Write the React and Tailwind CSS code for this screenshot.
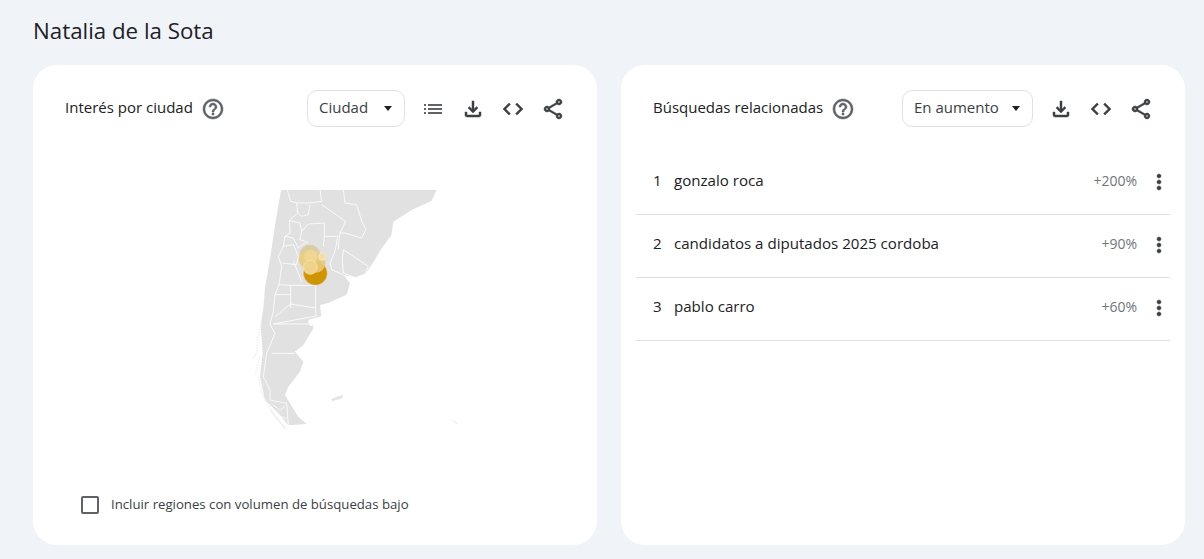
const paths = {
  help: "M11 18h2v-2h-2v2zm1-16C6.48 2 2 6.48 2 12s4.48 10 10 10 10-4.48 10-10S17.52 2 12 2zm0 18c-4.41 0-8-3.59-8-8s3.59-8 8-8 8 3.59 8 8-3.59 8-8 8zm0-14c-2.21 0-4 1.79-4 4h2c0-1.1.9-2 2-2s2 .9 2 2c0 2-3 1.75-3 5h2c0-2.25 3-2.5 3-5 0-2.21-1.79-4-4-4z",
  list: "M3 13h2v-2H3v2zm0 4h2v-2H3v2zm0-8h2V7H3v2zm4 4h14v-2H7v2zm0 4h14v-2H7v2zM7 7v2h14V7H7z",
  download: "M18 15v3H6v-3H4v3c0 1.1.9 2 2 2h12c1.1 0 2-.9 2-2v-3h-2zm-1-4l-1.41-1.41L13 12.17V4h-2v8.17L8.41 9.59 7 11l5 5 5-5z",
  code: "M9.4 16.6L4.8 12l4.6-4.6L8 6l-6 6 6 6 1.4-1.4zm5.2 0l4.6-4.6-4.6-4.6L16 6l6 6-6 6-1.4-1.4z",
  share: "M18 16.08c-.76 0-1.44.3-1.96.77L8.91 12.7c.05-.23.09-.46.09-.7s-.04-.47-.09-.7l7.05-4.11c.54.5 1.25.81 2.04.81 1.66 0 3-1.34 3-3s-1.34-3-3-3-3 1.34-3 3c0 .24.04.47.09.7L8.04 9.81C7.5 9.31 6.79 9 6 9c-1.66 0-3 1.34-3 3s1.34 3 3 3c.79 0 1.5-.31 2.04-.81l7.12 4.16c-.05.21-.08.43-.08.65 0 1.61 1.31 2.92 2.92 2.92 1.61 0 2.92-1.31 2.92-2.92s-1.31-2.92-2.92-2.92zM18 4c.55 0 1 .45 1 1s-.45 1-1 1-1-.45-1-1 .45-1 1-1zM6 13c-.55 0-1-.45-1-1s.45-1 1-1 1 .45 1 1-.45 1-1 1zm12 7.02c-.55 0-1-.45-1-1s.45-1 1-1 1 .45 1 1-.45 1-1 1z",
  more: "M12 8c1.1 0 2-.9 2-2s-.9-2-2-2-2 .9-2 2 .9 2 2 2zm0 2c-1.1 0-2 .9-2 2s.9 2 2 2 2-.9 2-2-.9-2-2-2zm0 6c-1.1 0-2 .9-2 2s.9 2 2 2 2-.9 2-2-.9-2-2-2z",
};

// a thin stroke on top of the fill, the reference icons sit a bit heavier
const Icon = ({ name, className, heavy }) => (
  <svg viewBox="0 0 24 24" className={className} fill="currentColor" stroke={heavy ? "currentColor" : "none"} strokeWidth={heavy ? 0.5 : 0}>
    <path d={paths[name]} />
  </svg>
);

const Dropdown = ({ label, className }) => (
  <div className={`flex h-[37px] items-center justify-between rounded-[10px] border border-[#dfe1e5] pl-[11px] pr-[12px] text-[15px] text-[#3c4043] ${className}`}>
    <span className="-mt-[2px]">{label}</span>
    <span className="h-0 w-0 border-x-[4.5px] border-t-[5px] border-x-transparent border-t-[#202124]" />
  </div>
);

const ToolIcon = ({ name, className = "text-[#3c4043]", heavy = true }) => (
  <Icon name={name} heavy={heavy} className={`h-[24px] w-[24px] shrink-0 ${className}`} />
);

const CardHeader = ({ title, dropdown, dropdownClass, tools }) => (
  <div className="flex h-[37px] items-center">
    <span className="-mt-[2px] text-[15px] text-[#202124]">{title}</span>
    <Icon name="help" heavy className="ml-[8px] h-[24px] w-[24px] text-[#5f6368]" />
    <div className="ml-auto flex items-center">
      <Dropdown label={dropdown} className={dropdownClass} />
      {tools}
    </div>
  </div>
);

const ArgentinaMap = () => (
  <svg viewBox="0 0 720 780" className="h-[260px] w-[240px]">
    <path
      fill="#e1e1e1"
      d="M153 30 L620 30 L605 62 L545 90 L490 125 L484 165 L455 205 L428 250 L408 280 L378 293 L340 284 L360 309 L350 344 L295 369 L270 375 L274 408 L235 420 L235 432 L250 445 L235 470 L220 495 L195 515 L220 545 L210 575 L175 620 L165 645 L180 670 L205 710 L230 732 L175 736 L145 700 L105 660 L90 590 L98 520 L92 435 L100 384 L105 324 L122 224 L137 124 Z"
    />
    <g fill="none" stroke="#ffffff" strokeWidth="2.4" strokeLinejoin="round">
      <path d="M172 30 L182 64 L200 69 L203 99 L178 122 L180 159 L165 169 L160 199 L145 229 L155 259 L147 314 L135 344 L130 394 L120 432 L135 460 L110 520 L100 590 L120 630 L120 660 L170 670 L175 736" />
      <path d="M270 30 L275 64 L240 69 L210 69 L200 69 M240 74 L235 104 L215 109 L200 94" />
      <path d="M275 74 L347 124 L330 159 M340 30 L345 69 L380 74 L395 124 L408 149 L395 174 L345 159 L330 159 L324 209" />
      <path d="M235 132 L283 129 L283 169 L280 199 M283 169 L323 169 L315 214 L300 249 L305 269 L340 284" />
      <path d="M178 122 L210 129 L215 154 L235 132 M215 154 L210 179 L235 189 M165 169 L190 174 L205 204 L225 189" />
      <path d="M160 199 L190 194 L205 229 L200 254 L155 249 M190 244 L215 304 M147 314 L182 316 L182 384" />
      <path d="M182 316 L257 316 L257 384 L258 408 L130 432 M130 432 L235 432 M125 520 L195 520 M135 344 L182 344 M135 410 L182 372 L255 384" />
    </g>
    <path fill="none" stroke="#ffffff" strokeWidth="2.5" d="M340 209 L415 259 L405 283 L375 293 L340 279 L337 239 L340 209" />
    <path
      fill="none"
      stroke="#eeeeee"
      strokeWidth="5"
      strokeDasharray="4 4"
      d="M96 432 L84 470 L80 520 L70 535 M90 530 L76 585 M85 590 L95 640 L110 665 M100 650 L130 700 L165 745 M120 690 L170 750"
    />
    <path fill="none" stroke="#fbfbfb" strokeWidth="2.5" d="M125 672 L150 690 L165 680 M140 705 L170 716" />
    <path fill="#e4e4e4" d="M303 658 L320 650 L340 644 L335 656 L318 660 L308 664 Z" />
    <path fill="#ececec" d="M660 714 L684 730 L680 733 Z" />
    <path fill="#e1e1e1" d="M238 440 L250 436 L248 450 Z" />
    <circle cx="256" cy="280" r="35" fill="#cf9400" stroke="#d8b04a" strokeWidth="1.5" />
    <circle cx="240" cy="225" r="31" fill="#d9c48f" opacity="0.75" />
    <circle cx="235" cy="238" r="29" fill="#e9cf86" />
    <circle cx="258" cy="250" r="28" fill="#e9c877" opacity="0.9" />
    <circle cx="243" cy="230" r="20" fill="#efd691" />
    <circle cx="241" cy="262" r="21" fill="#efd38b" stroke="#f4e2b0" strokeWidth="2" />
    <circle cx="277" cy="230" r="11" fill="#f3dfa6" stroke="#f8ecc9" strokeWidth="2" />
  </svg>
);

const rows = [
  { n: 1, term: "gonzalo roca", value: "+200%" },
  { n: 2, term: "candidatos a diputados 2025 cordoba", value: "+90%" },
  { n: 3, term: "pablo carro", value: "+60%" },
];

export default function App() {
  return (
    <div className="h-[559px] overflow-hidden bg-[#f0f4f9] pl-[33px] pr-[19px] pt-[16px] font-['Open_Sans','Noto_Sans',sans-serif] text-[#202124]">
      <h1 className="h-[33px] text-[22.3px] leading-[30px] text-[#202124]">Natalia de la Sota</h1>
      <div className="mt-[16px] flex gap-[24px]">
        <section className="flex h-[480px] w-[564px] flex-col rounded-[24px] bg-white pl-[32px] pr-[32px] pt-[25px]">
          <CardHeader
            title="Interés por ciudad"
            dropdown="Ciudad"
            dropdownClass="w-[98px]"
            tools={
              <div className="ml-[16px] flex gap-[16px]">
                <ToolIcon name="list" className="text-[#5f6368]" heavy={false} />
                <ToolIcon name="download" />
                <ToolIcon name="code" />
                <ToolIcon name="share" />
              </div>
            }
          />
          <div className="ml-[165px] mt-[53px]">
            <ArgentinaMap />
          </div>
          <label className="ml-[16px] mt-[55px] flex items-center gap-[12px] text-[13.2px] text-[#3c4043]">
            <span className="h-[18px] w-[18px] rounded-[2px] border-2 border-[#5f6368]" />
            Incluir regiones con volumen de búsquedas bajo
          </label>
        </section>
        <section className="flex h-[480px] w-[564px] flex-col rounded-[24px] bg-white px-[15px] pt-[25px]">
          <div className="pl-[17px] pr-[17px]">
            <CardHeader
              title="Búsquedas relacionadas"
              dropdown="En aumento"
              dropdownClass="w-[131px]"
              tools={
                <div className="ml-[16px] flex gap-[16px]">
                  <ToolIcon name="download" />
                  <ToolIcon name="code" />
                  <ToolIcon name="share" />
                </div>
              }
            />
          </div>
          <div className="mt-[25px]">
            {rows.map((row) => (
              <div key={row.n} className="flex h-[63px] items-center border-b border-[#e0e0e0] pb-[3px] pl-[17px] text-[15.1px] text-[#202124]">
                <span className="-mt-[2px] w-[21px]">{row.n}</span>
                <span className="-mt-[2px]">{row.term}</span>
                <span className="-mt-[2px] ml-auto text-[14px] text-[#70757a]">{row.value}</span>
                <Icon name="more" heavy className="-mr-[1px] ml-[10px] h-[24px] w-[24px] text-[#3c4043]" />
              </div>
            ))}
          </div>
        </section>
      </div>
    </div>
  );
}
